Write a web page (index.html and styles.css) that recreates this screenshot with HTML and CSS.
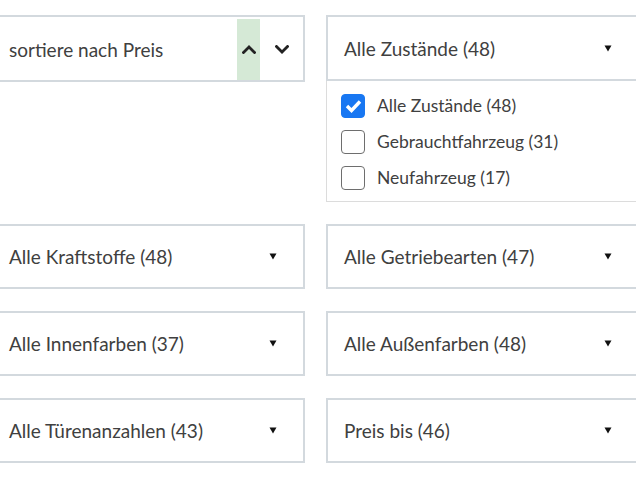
FILE: index.html
```html
<!DOCTYPE html>
<html lang="de">
<head>
<meta charset="utf-8">
<title>Filter</title>
<link rel="stylesheet" href="styles.css">
</head>
<body>
<div class="filters">
  <div class="box sort">
    <span class="label">sortiere nach Preis</span>
    <div class="sort-btns">
      <span class="sort-btn active">
        <svg width="14" height="9" viewBox="0 0 14 9"><path d="M1.5 7.5 L7 2 L12.5 7.5" fill="none" stroke="#222" stroke-width="2.8" stroke-linecap="square"/></svg>
      </span>
      <span class="sort-btn">
        <svg width="14" height="9" viewBox="0 0 14 9"><path d="M1.5 1.5 L7 7 L12.5 1.5" fill="none" stroke="#222" stroke-width="2.8" stroke-linecap="square"/></svg>
      </span>
    </div>
  </div>

  <div class="dropdown">
    <div class="box">
      <span class="label">Alle Zustände (48)</span>
      <svg class="caret" width="8" height="7" viewBox="0 0 8 7"><path d="M0.5 0.5 H7.5 L4 6.5 Z" fill="#111"/></svg>
    </div>
    <div class="panel">
      <label class="item"><span class="check checked"><svg width="17" height="14" viewBox="0 0 17 14"><path d="M2 7 L6.5 11.5 L15 2.5" fill="none" stroke="#fff" stroke-width="3.4"/></svg></span>Alle Zustände (48)</label>
      <label class="item"><span class="check"></span>Gebrauchtfahrzeug (31)</label>
      <label class="item"><span class="check"></span>Neufahrzeug (17)</label>
    </div>
  </div>

  <div class="box"><span class="label">Alle Kraftstoffe (48)</span><svg class="caret" width="8" height="7" viewBox="0 0 8 7"><path d="M0.5 0.5 H7.5 L4 6.5 Z" fill="#111"/></svg></div>
  <div class="box"><span class="label">Alle Getriebearten (47)</span><svg class="caret" width="8" height="7" viewBox="0 0 8 7"><path d="M0.5 0.5 H7.5 L4 6.5 Z" fill="#111"/></svg></div>
  <div class="box"><span class="label">Alle Innenfarben (37)</span><svg class="caret" width="8" height="7" viewBox="0 0 8 7"><path d="M0.5 0.5 H7.5 L4 6.5 Z" fill="#111"/></svg></div>
  <div class="box"><span class="label">Alle Außenfarben (48)</span><svg class="caret" width="8" height="7" viewBox="0 0 8 7"><path d="M0.5 0.5 H7.5 L4 6.5 Z" fill="#111"/></svg></div>
  <div class="box"><span class="label">Alle Türenanzahlen (43)</span><svg class="caret" width="8" height="7" viewBox="0 0 8 7"><path d="M0.5 0.5 H7.5 L4 6.5 Z" fill="#111"/></svg></div>
  <div class="box"><span class="label">Preis bis (46)</span><svg class="caret" width="8" height="7" viewBox="0 0 8 7"><path d="M0.5 0.5 H7.5 L4 6.5 Z" fill="#111"/></svg></div>
</div>
</body>
</html>
```

FILE: styles.css
```css
html, body {
  margin: 0;
  padding: 0;
  background: #fff;
  overflow: hidden;
}

body {
  font-family: Lato, "Liberation Sans", sans-serif;
  color: #404040;
}

.filters {
  display: grid;
  grid-template-columns: 314px 314px;
  column-gap: 21px;
  row-gap: 22px;
  margin: 15px 0 0 -9px;
  align-items: start;
}

.box {
  box-sizing: border-box;
  height: 65px;
  border: 2px solid #d3d9de;
  display: flex;
  align-items: center;
  justify-content: space-between;
  padding: 0 26px 0 16px;
  background: #fff;
}

.label {
  font-size: 19px;
  line-height: 1;
}

.caret {
  display: block;
}

.sort {
  height: 67px;
  padding-right: 10px;
  align-items: stretch;
}

.sort .label {
  align-self: center;
  margin-top: 2px;
}

.sort-btns {
  display: flex;
  gap: 10px;
}

.sort-btn {
  width: 23px;
  display: flex;
  align-items: center;
  justify-content: center;
  margin-top: 2px;
}

.sort-btn.active {
  background: #d5e9d6;
}

.dropdown .box {
  height: 66px;
}

.dropdown .label {
  margin-top: 1px;
}

.panel {
  border: 1px solid #dcdcdc;
  border-top: none;
  padding: 13px 0 11px 14px;
  display: flex;
  flex-direction: column;
  gap: 12px;
}

.item {
  display: flex;
  align-items: center;
  gap: 12px;
  font-size: 17.5px;
  line-height: 24px;
  color: #404040;
}

.check {
  box-sizing: border-box;
  width: 24px;
  height: 24px;
  border: 1.5px solid #6e6e6e;
  border-radius: 4px;
  display: flex;
  align-items: center;
  justify-content: center;
  background: #fff;
}

.check.checked {
  background: #1877f2;
  border-color: #1877f2;
}
```
